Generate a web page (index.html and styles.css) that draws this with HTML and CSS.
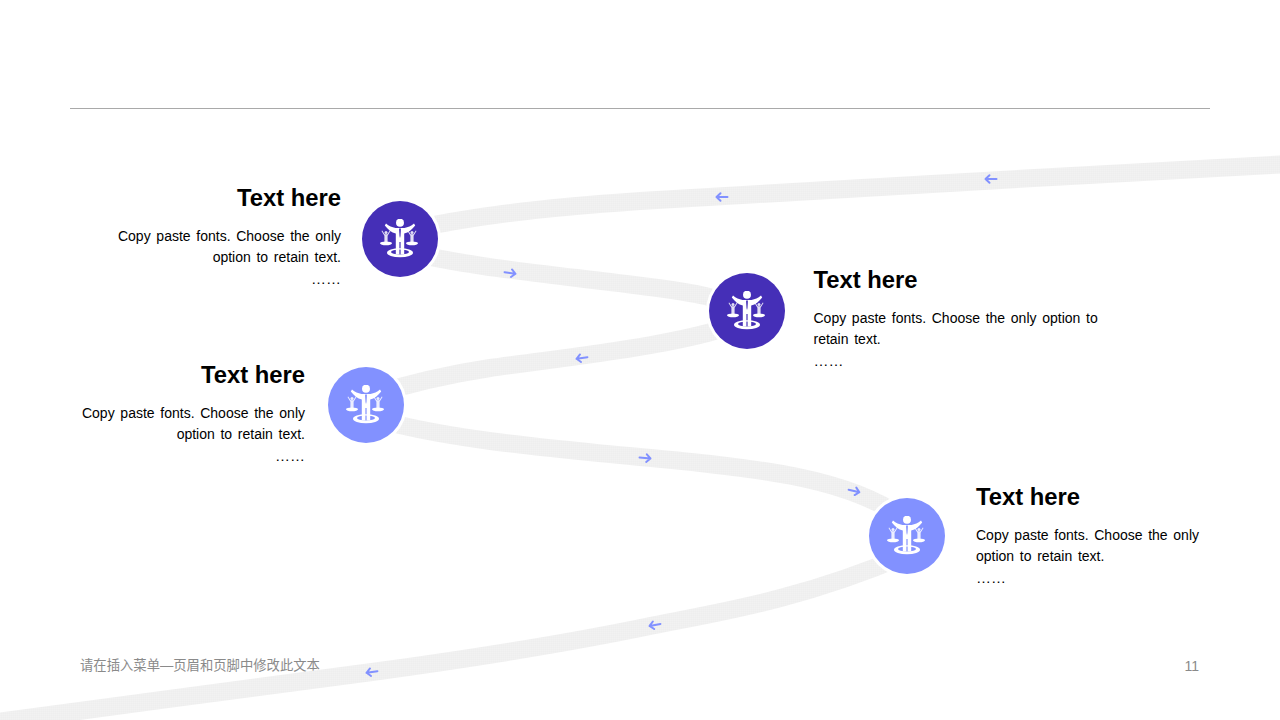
FILE: index.html
```html
<!DOCTYPE html>
<html lang="en">
<head>
<meta charset="utf-8">
<title>Slide 11</title>
<link rel="stylesheet" href="styles.css">
</head>
<body>
<main class="slide">
  <hr class="rule">
  <svg class="road" width="1280" height="720" viewBox="0 0 1280 720" aria-hidden="true">
    <defs>
      <pattern id="grain" width="2" height="2" patternUnits="userSpaceOnUse">
        <rect width="2" height="2" fill="#f0f0f0"/>
        <rect width="1" height="1" fill="#f2f2f2"/>
        <rect x="1" y="1" width="1" height="1" fill="#eeeeee"/>
      </pattern>
      <symbol id="arrow" viewBox="-8 -6 16 12" overflow="visible">
        <path d="M-5.500 0H5.500M-1.500-3.800-5.500 0-1.500 3.800" fill="none" stroke="#8291ff" stroke-width="2" stroke-linecap="round" stroke-linejoin="round"/>
      </symbol>
      <symbol id="figure" viewBox="-20 -20 40 40">
        <ellipse cx="-14" cy="4.300" rx="6" ry="1.900" fill="#fff"/>
        <ellipse cx="12" cy="4.300" rx="6" ry="1.900" fill="#fff"/>
        <g fill="#fff" opacity=".85">
          <circle cx="-14" cy="-6.500" r="1.500"/>
          <path d="M-18.500-8-17.800-8.500-15.300-4.800H-12.700L-10.200-8.500-9.500-8-12.400-3.300V3.400H-15.600V-3.300Z"/>
          <circle cx="12" cy="-6.500" r="1.500"/>
          <path d="M7.500-8 8.200-8.500 10.700-4.800H13.300L15.800-8.500 16.500-8 13.600-3.300V3.400H10.400V-3.300Z"/>
        </g>
        <ellipse cx="0" cy="13.700" rx="13" ry="4.500" fill="#fff"/>
        <ellipse cx="0" cy="13" rx="9" ry="2.500" fill="var(--node)"/>
        <g fill="#fff">
          <circle cx="0" cy="-16.300" r="4"/>
          <path d="M-15.200-13.500-14-15.400C-11-13-8-11.500-4.500-11H4.500C8-11.500 11-13 14-15.400L15.200-13.500C12-9.500 8.500-6.500 4.200-5.500V15.500H.6V3H-.6V15.500H-4.200V-5.500C-8.500-6.500-12-9.500-15.200-13.500Z"/>
        </g>
        <path d="M0-11-.9-10-.5-3 0-1 .5-3 .9-10Z" fill="var(--node)"/>
      </symbol>
    </defs>
    <g fill="none" stroke="url(#grain)" stroke-width="18">
      <path d="M1290 164C1100 175 800 190 640 201 540 208 470 216 400 232"/>
      <path d="M400 250C470 268 560 275 650 287 690 292 725 298 747 311"/>
      <path d="M747 320C690 345 560 358 490 368 450 374 410 383 366 397"/>
      <path d="M366 416C430 436 520 446 640 457 760 468 850 478 906 520"/>
      <path d="M906 555C800 600 720 612 655 625 560 645 460 660 372 672 240 690 120 705-10 723"/>
    </g>
    <use href="#arrow" x="983" y="173" width="16" height="12"/>
    <use href="#arrow" x="714" y="191" width="16" height="12"/>
    <use href="#arrow" x="502" y="267" width="16" height="12" transform="rotate(188 510 273)"/>
    <use href="#arrow" x="574" y="352" width="16" height="12" transform="rotate(-8 582 358)"/>
    <use href="#arrow" x="637" y="452" width="16" height="12" transform="rotate(185 645 458)"/>
    <use href="#arrow" x="846" y="485" width="16" height="12" transform="rotate(193 854 491)"/>
    <use href="#arrow" x="647" y="619" width="16" height="12" transform="rotate(-10 655 625)"/>
    <use href="#arrow" x="364" y="666" width="16" height="12" transform="rotate(-8 372 672)"/>
  </svg>

  <div class="node node-a node-dark"><svg class="figure" width="40" height="40"><use href="#figure"/></svg></div>
  <div class="node node-b node-dark"><svg class="figure" width="40" height="40"><use href="#figure"/></svg></div>
  <div class="node node-c node-light"><svg class="figure" width="40" height="40"><use href="#figure"/></svg></div>
  <div class="node node-d node-light"><svg class="figure" width="40" height="40"><use href="#figure"/></svg></div>

  <section class="callout callout-a end">
    <h2>Text here</h2>
    <p>Copy paste fonts. Choose the only option to retain text.</p>
    <p class="dots">……</p>
  </section>
  <section class="callout callout-b wide">
    <h2>Text here</h2>
    <p>Copy paste fonts. Choose the only option to retain text.</p>
    <p class="dots">……</p>
  </section>
  <section class="callout callout-c end">
    <h2>Text here</h2>
    <p>Copy paste fonts. Choose the only option to retain text.</p>
    <p class="dots">……</p>
  </section>
  <section class="callout callout-d">
    <h2>Text here</h2>
    <p>Copy paste fonts. Choose the only option to retain text.</p>
    <p class="dots">……</p>
  </section>

  <footer class="footer">
    <span class="footer-note" lang="zh-CN">请在插入菜单—页眉和页脚中修改此文本</span>
    <span class="footer-page">11</span>
  </footer>
</main>
</body>
</html>
```
FILE: styles.css
```css
* { box-sizing: border-box; }
html, body { margin: 0; padding: 0; background: #fff; }
body { width: 1280px; height: 720px; overflow: hidden; font-family: "Liberation Sans", Arial, sans-serif; color: #000; }

.slide { position: relative; width: 1280px; height: 720px; display: flex; flex-direction: column; padding: 108px 70px 27px; overflow: hidden; }
.rule { width: 100%; height: 1px; margin: 0; border: 0; background: #a9a9a9; flex: none; }

.road { position: absolute; left: 0; top: 0; }

.node { position: absolute; width: 76px; height: 76px; border-radius: 50%; box-shadow: 0 0 0 3px #fff; display: flex; align-items: center; justify-content: center; }
.node-dark { --node: #452fb7; background: var(--node); }
.node-light { --node: #8291ff; background: var(--node); }
.node-a { left: 362px; top: 201px; }
.node-b { left: 709px; top: 273px; }
.node-c { left: 328px; top: 367px; }
.node-d { left: 868.500px; top: 498px; }
.figure { display: block; flex: none; }

.callout { position: absolute; width: 240px; }
.callout h2 { margin: 0 0 14px; font-size: 23.800px; line-height: 28px; font-weight: 700; }
.callout p { margin: 0; font-size: 14px; line-height: 20.500px; word-spacing: 1.800px; }
.callout .dots { margin-top: 2px; font-size: 15px; }
.callout.end { text-align: right; }
.callout.wide { width: 300px; }
.callout-a { left: 101px; top: 184px; }
.callout-b { left: 813.500px; top: 266px; }
.callout-c { left: 65px; top: 361px; }
.callout-d { left: 976px; top: 483px; }

.footer { margin-top: auto; height: 54px; padding: 0 11px 0 10px; display: flex; justify-content: space-between; align-items: center; font-size: 13.330px; color: #8a8a8a; }
.footer-note { font-family: "Liberation Sans", "Noto Sans CJK SC", sans-serif; line-height: 20px; }
.footer-page { font-family: "Liberation Sans", Arial, sans-serif; font-size: 14px; }
```
